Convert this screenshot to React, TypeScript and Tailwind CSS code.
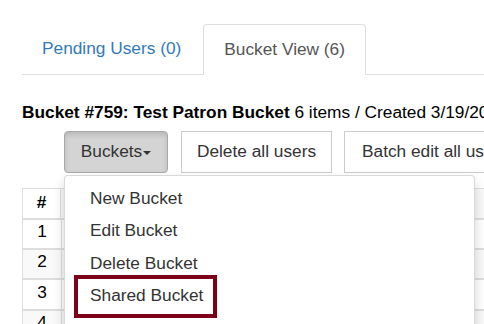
import React from "react";

export default function App() {
  const rows = [1, 2, 3, 4];
  return (
    <div className="relative w-[484px] h-[324px] overflow-hidden bg-white text-[17.3px] text-[#333] font-['Liberation_Sans',Arial,sans-serif]">
      {/* Tabs */}
      <div className="ml-[22px] pt-[24px] flex border-b border-[#ddd]">
        <div className="h-[50px] flex items-center px-[20px] mr-[2px] text-[#337ab7] whitespace-nowrap shrink-0">
          Pending Users (0)
        </div>
        <div className="h-[51px] -mb-px flex items-center px-[20px] text-[#555] bg-white border border-[#ddd] border-b-transparent rounded-t-[4px] whitespace-nowrap shrink-0">
          Bucket View (6)
        </div>
      </div>

      {/* Heading */}
      <div className="ml-[22px] mt-[25px] h-[24px] leading-[24px] text-black whitespace-nowrap">
        <span className="font-bold">Bucket #759: Test Patron Bucket</span> 6 items / Created 3/19/2019
      </div>

      {/* Buttons */}
      <div className="ml-[64px] mt-[7px] flex h-[42px] whitespace-nowrap">
        <div className="shrink-0 w-[104px] h-[42px] flex items-center justify-center bg-[#d4d4d4] border border-[#a8a8a8] rounded-[4px] shadow-[inset_0_3px_5px_rgba(0,0,0,0.125)]">
          <span>Buckets</span>
          <span className="inline-block w-0 h-0 ml-[1px] mt-[2px] border-t-[4px] border-t-[#333] border-x-[4px] border-x-transparent" />
        </div>
        <div className="shrink-0 ml-[13px] w-[151px] h-[42px] flex items-center justify-center bg-white border border-[#ccc]">
          Delete all users
        </div>
        <div className="shrink-0 ml-[12px] w-[170px] h-[42px] flex items-center pl-[17px] bg-white border border-[#ccc]">
          Batch edit all users
        </div>
      </div>

      {/* Table */}
      <div className="ml-[22px] mt-[15px] w-[470px] border-l border-[#ddd]">
        <div className="flex h-[30px] border-t border-[#ddd]">
          <div className="w-[38px] flex items-center justify-center font-bold text-black border-r border-[#ddd] pb-[1px]">#</div>
          <div className="flex-1 bg-[#f9f9f9]" />
        </div>
        {rows.map((r, i) => (
          <div
            key={r}
            className={`flex ${i === 2 ? "h-[31px]" : "h-[30px]"} border-t-2 border-[#ddd] ${i % 2 === 1 ? "bg-[#f9f9f9]" : "bg-white"}`}
          >
            <div className="w-[38px] flex items-center justify-center text-black pb-[4px]">{r}</div>
            <div className="flex-1 border-l border-[#ddd]" />
          </div>
        ))}
      </div>

      {/* Dropdown menu */}
      <div className="absolute left-[64px] top-[175px] w-[411px] h-[170px] bg-white border border-[rgba(0,0,0,0.15)] rounded-[4px] shadow-[0_6px_12px_rgba(0,0,0,0.175)] pt-[6px]">
        {["New Bucket", "Edit Bucket", "Delete Bucket", "Shared Bucket"].map((t) => (
          <div key={t} className="h-[32.3px] leading-[32.3px] pl-[25px] text-[#333] whitespace-nowrap">
            {t}
          </div>
        ))}
        <div className="absolute left-[9px] top-[99px] w-[143px] h-[43px] border-[4px] border-[#7d0019]" />
      </div>
    </div>
  );
}
